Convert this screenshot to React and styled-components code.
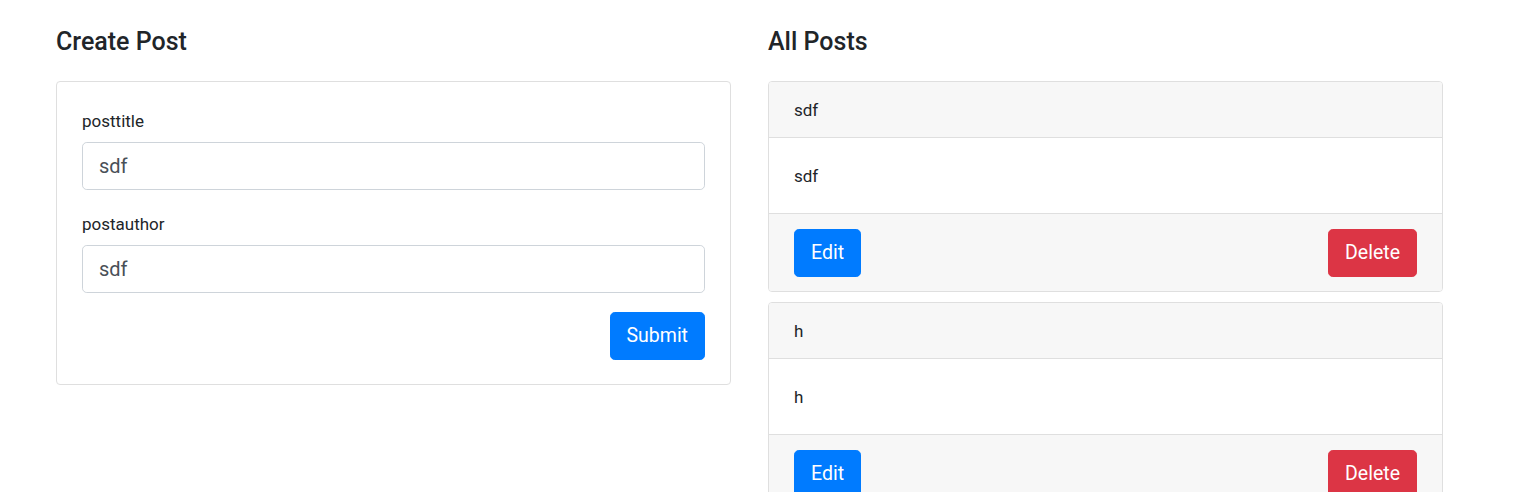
import React from "react";
import styled, { createGlobalStyle } from "styled-components";

const Global = createGlobalStyle`
  * { box-sizing: border-box; }
  body {
    margin: 0;
    background: #fff;
    font-family: Roboto, "Noto Sans", "Liberation Sans", sans-serif;
    font-size: 17px;
    line-height: 24px;
    color: #212529;
  }
`;

const Page = styled.div`
  display: flex;
  align-items: flex-start;
  gap: 37px;
  padding: 27px 56px 0 56px;
`;

const Column = styled.div`
  width: 675px;
  display: flex;
  flex-direction: column;
`;

const Heading = styled.h4`
  margin: 0 0 25px 0;
  font-size: 25px;
  font-weight: 500;
  line-height: 29px;
  color: #212529;
`;

const Card = styled.div`
  border: 1px solid #dfdfdf;
  border-radius: 4px;
  background: #fff;
  overflow: hidden;
  margin-bottom: ${(p) => p.$mb || 0}px;
`;

const Form = styled.form`
  display: flex;
  flex-direction: column;
  padding: 27px 25px 24px 25px;
`;

const Group = styled.div`
  display: flex;
  flex-direction: column;
  margin-bottom: ${(p) => p.$mb}px;
`;

const Label = styled.label`
  margin-bottom: 9px;
  font-size: 17px;
  line-height: 24px;
`;

const Input = styled.input`
  height: 48px;
  padding: 8px 16px;
  font-family: inherit;
  font-size: 20px;
  line-height: 1.5;
  color: #495057;
  border: 1px solid #ced4da;
  border-radius: 4.8px;
  background: #fff;
  outline: none;
`;

const Actions = styled.div`
  display: flex;
  justify-content: flex-end;
`;

const Button = styled.button`
  height: 48px;
  padding: 0 16px;
  font-family: inherit;
  font-size: 19.5px;
  line-height: 1.5;
  color: #fff;
  border: 1px solid ${(p) => (p.$variant === "danger" ? "#dc3545" : "#007bff")};
  background: ${(p) => (p.$variant === "danger" ? "#dc3545" : "#007bff")};
  border-radius: 4.8px;
  cursor: pointer;
`;

const CardHeader = styled.div`
  background: #f7f7f7;
  border-bottom: 1px solid #dfdfdf;
  padding: 16px 25px 15px 25px;
`;

const CardBody = styled.div`
  padding: 26px 25px 25px 25px;
  border-bottom: 1px solid #dfdfdf;
`;

const CardFooter = styled.div`
  background: #f7f7f7;
  padding: 15px 25px 14px 25px;
  display: flex;
  justify-content: space-between;
`;

const posts = [
  { id: 1, title: "sdf", author: "sdf" },
  { id: 2, title: "h", author: "h" },
];

export default function App() {
  return (
    <>
      <Global />
      <Page>
        <Column>
          <Heading>Create Post</Heading>
          <Card>
            <Form onSubmit={(e) => e.preventDefault()}>
              <Group $mb={22}>
                <Label>posttitle</Label>
                <Input defaultValue="sdf" />
              </Group>
              <Group $mb={19}>
                <Label>postauthor</Label>
                <Input defaultValue="sdf" />
              </Group>
              <Actions>
                <Button type="submit">Submit</Button>
              </Actions>
            </Form>
          </Card>
        </Column>
        <Column>
          <Heading>All Posts</Heading>
          {posts.map((p) => (
            <Card key={p.id} $mb={10}>
              <CardHeader>{p.title}</CardHeader>
              <CardBody>{p.author}</CardBody>
              <CardFooter>
                <Button>Edit</Button>
                <Button $variant="danger">Delete</Button>
              </CardFooter>
            </Card>
          ))}
        </Column>
      </Page>
    </>
  );
}
